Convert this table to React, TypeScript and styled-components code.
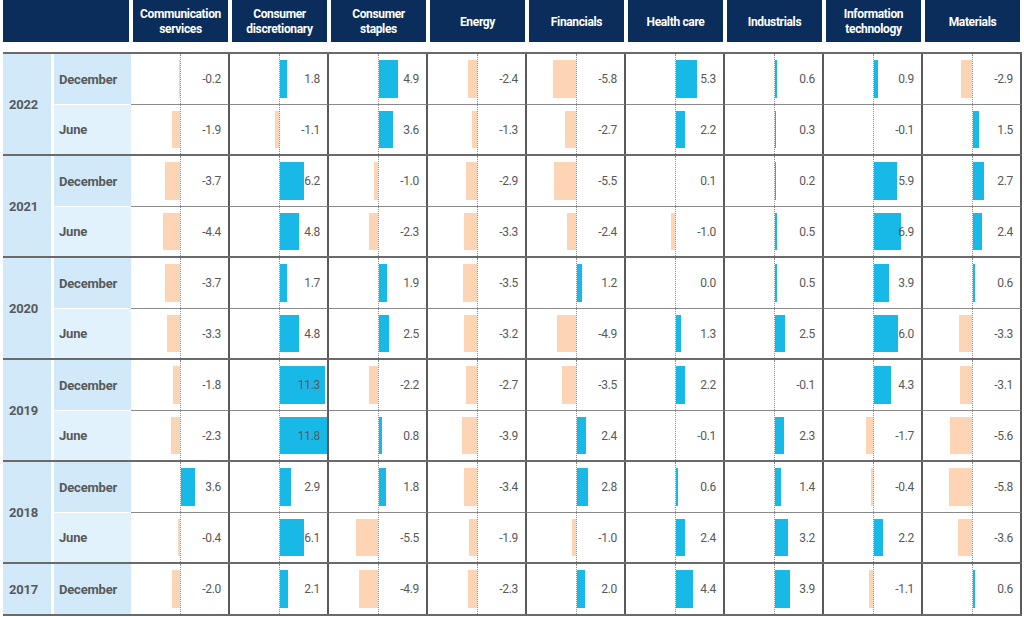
import React from "react";
import styled, { createGlobalStyle } from "styled-components";

const GlobalStyle = createGlobalStyle`
  html, body {
    margin: 0;
    padding: 0;
    background: #ffffff;
  }
  body {
    font-family: Roboto, "Liberation Sans", sans-serif;
  }
`;

const AXIS = 49;
const SCALE = 3.95;

const SECTORS = [
  ["Communication", "services"],
  ["Consumer", "discretionary"],
  ["Consumer", "staples"],
  ["Energy"],
  ["Financials"],
  ["Health care"],
  ["Industrials"],
  ["Information", "technology"],
  ["Materials"],
];

type Period = { month: string; values: number[] };
type Year = { year: string; periods: Period[] };

const DATA: Year[] = [
  {
    year: "2022",
    periods: [
      { month: "December", values: [-0.2, 1.8, 4.9, -2.4, -5.8, 5.3, 0.6, 0.9, -2.9] },
      { month: "June", values: [-1.9, -1.1, 3.6, -1.3, -2.7, 2.2, 0.3, -0.1, 1.5] },
    ],
  },
  {
    year: "2021",
    periods: [
      { month: "December", values: [-3.7, 6.2, -1.0, -2.9, -5.5, 0.1, 0.2, 5.9, 2.7] },
      { month: "June", values: [-4.4, 4.8, -2.3, -3.3, -2.4, -1.0, 0.5, 6.9, 2.4] },
    ],
  },
  {
    year: "2020",
    periods: [
      { month: "December", values: [-3.7, 1.7, 1.9, -3.5, 1.2, 0.0, 0.5, 3.9, 0.6] },
      { month: "June", values: [-3.3, 4.8, 2.5, -3.2, -4.9, 1.3, 2.5, 6.0, -3.3] },
    ],
  },
  {
    year: "2019",
    periods: [
      { month: "December", values: [-1.8, 11.3, -2.2, -2.7, -3.5, 2.2, -0.1, 4.3, -3.1] },
      { month: "June", values: [-2.3, 11.8, 0.8, -3.9, 2.4, -0.1, 2.3, -1.7, -5.6] },
    ],
  },
  {
    year: "2018",
    periods: [
      { month: "December", values: [3.6, 2.9, 1.8, -3.4, 2.8, 0.6, 1.4, -0.4, -5.8] },
      { month: "June", values: [-0.4, 6.1, -5.5, -1.9, -1.0, 2.4, 3.2, 2.2, -3.6] },
    ],
  },
  {
    year: "2017",
    periods: [{ month: "December", values: [-2.0, 2.1, -4.9, -2.3, 2.0, 4.4, 3.9, -1.1, 0.6] }],
  },
];

const Page = styled.div`
  width: 1024px;
  height: 617px;
  overflow: hidden;
  padding-left: 3px;
  box-sizing: border-box;
`;

const HeaderRow = styled.div`
  display: grid;
  grid-template-columns: 128px repeat(9, 99px);
  height: 42px;
  margin-bottom: 10px;
`;

const HeaderCell = styled.div<{ $corner?: boolean }>`
  box-sizing: border-box;
  background: #0b2d5b;
  margin: ${({ $corner }) => ($corner ? "0 2px 0 0" : "0 2px")};
  padding-top: 2px;
  display: flex;
  flex-direction: column;
  align-items: center;
  justify-content: center;
  text-align: center;
  color: #ffffff;
  font-weight: 700;
  font-size: 12px;
  letter-spacing: -0.35px;
  line-height: 15px;
`;

const Body = styled.div`
  width: 1019px;
  border-bottom: 2px solid #6a6a6a;
`;

const YearGroup = styled.div`
  display: flex;
  border-top: 2px solid #6a6a6a;
`;

const YearCell = styled.div`
  width: 48px;
  margin-right: 3px;
  padding-left: 6px;
  box-sizing: border-box;
  background: #d1e9f8;
  display: flex;
  align-items: center;
  font-weight: 700;
  font-size: 13px;
  letter-spacing: -0.2px;
  color: #58595b;
`;

const Months = styled.div`
  display: flex;
  flex-direction: column;
`;

const MonthRow = styled.div`
  display: grid;
  grid-template-columns: 77px repeat(9, 99px);
  height: 50px;
`;

const MonthCell = styled.div<{ $june: boolean }>`
  box-sizing: border-box;
  background: ${({ $june }) => ($june ? "#e2f2fc" : "#d1e9f8")};
  border-top: ${({ $june }) => ($june ? "1px solid #ffffff" : "none")};
  display: flex;
  align-items: center;
  padding-left: 5px;
  font-weight: 700;
  font-size: 13px;
  letter-spacing: -0.2px;
  color: #58595b;
`;

const DataCell = styled.div<{ $divider: boolean }>`
  position: relative;
  box-sizing: border-box;
  border-right: 2px solid #5a5a5a;
  border-top: ${({ $divider }) => ($divider ? "1px solid #8a8a8a" : "none")};
  display: flex;
  align-items: center;
  justify-content: flex-end;
  padding-right: 7px;
  font-size: 12px;
  letter-spacing: -0.3px;
  color: #58595b;
`;

const Axis = styled.div`
  position: absolute;
  left: ${AXIS}px;
  top: 0;
  bottom: 0;
  border-left: 1px dotted #8c8c8c;
`;

const Bar = styled.div<{ $neg: boolean }>`
  position: absolute;
  top: 6px;
  bottom: 6px;
  background: ${({ $neg }) => ($neg ? "#fdd5b4" : "#18b9e6")};
`;

const Value = styled.span`
  position: relative;
  z-index: 1;
`;

const Cell: React.FC<{ value: number; divider: boolean }> = ({ value, divider }) => {
  const w = Math.round(Math.abs(value) * SCALE);
  const neg = value < 0;
  return (
    <DataCell $divider={divider}>
      {w > 0 && (
        <Bar
          $neg={neg}
          style={neg ? { left: AXIS - w, width: w } : { left: AXIS + 1, width: w }}
        />
      )}
      <Axis />
      <Value>{value.toFixed(1)}</Value>
    </DataCell>
  );
};

const App: React.FC = () => {
  return (
    <>
      <GlobalStyle />
      <Page>
        <HeaderRow>
          <HeaderCell $corner />
          {SECTORS.map((lines) => (
            <HeaderCell key={lines.join(" ")}>
              {lines.map((l) => (
                <span key={l}>{l}</span>
              ))}
            </HeaderCell>
          ))}
        </HeaderRow>
        <Body>
          {DATA.map((y) => (
            <YearGroup key={y.year}>
              <YearCell>{y.year}</YearCell>
              <Months>
                {y.periods.map((p, i) => (
                  <MonthRow key={p.month}>
                    <MonthCell $june={i > 0}>{p.month}</MonthCell>
                    {p.values.map((v, j) => (
                      <Cell key={j} value={v} divider={i > 0} />
                    ))}
                  </MonthRow>
                ))}
              </Months>
            </YearGroup>
          ))}
        </Body>
      </Page>
    </>
  );
};

export default App;
